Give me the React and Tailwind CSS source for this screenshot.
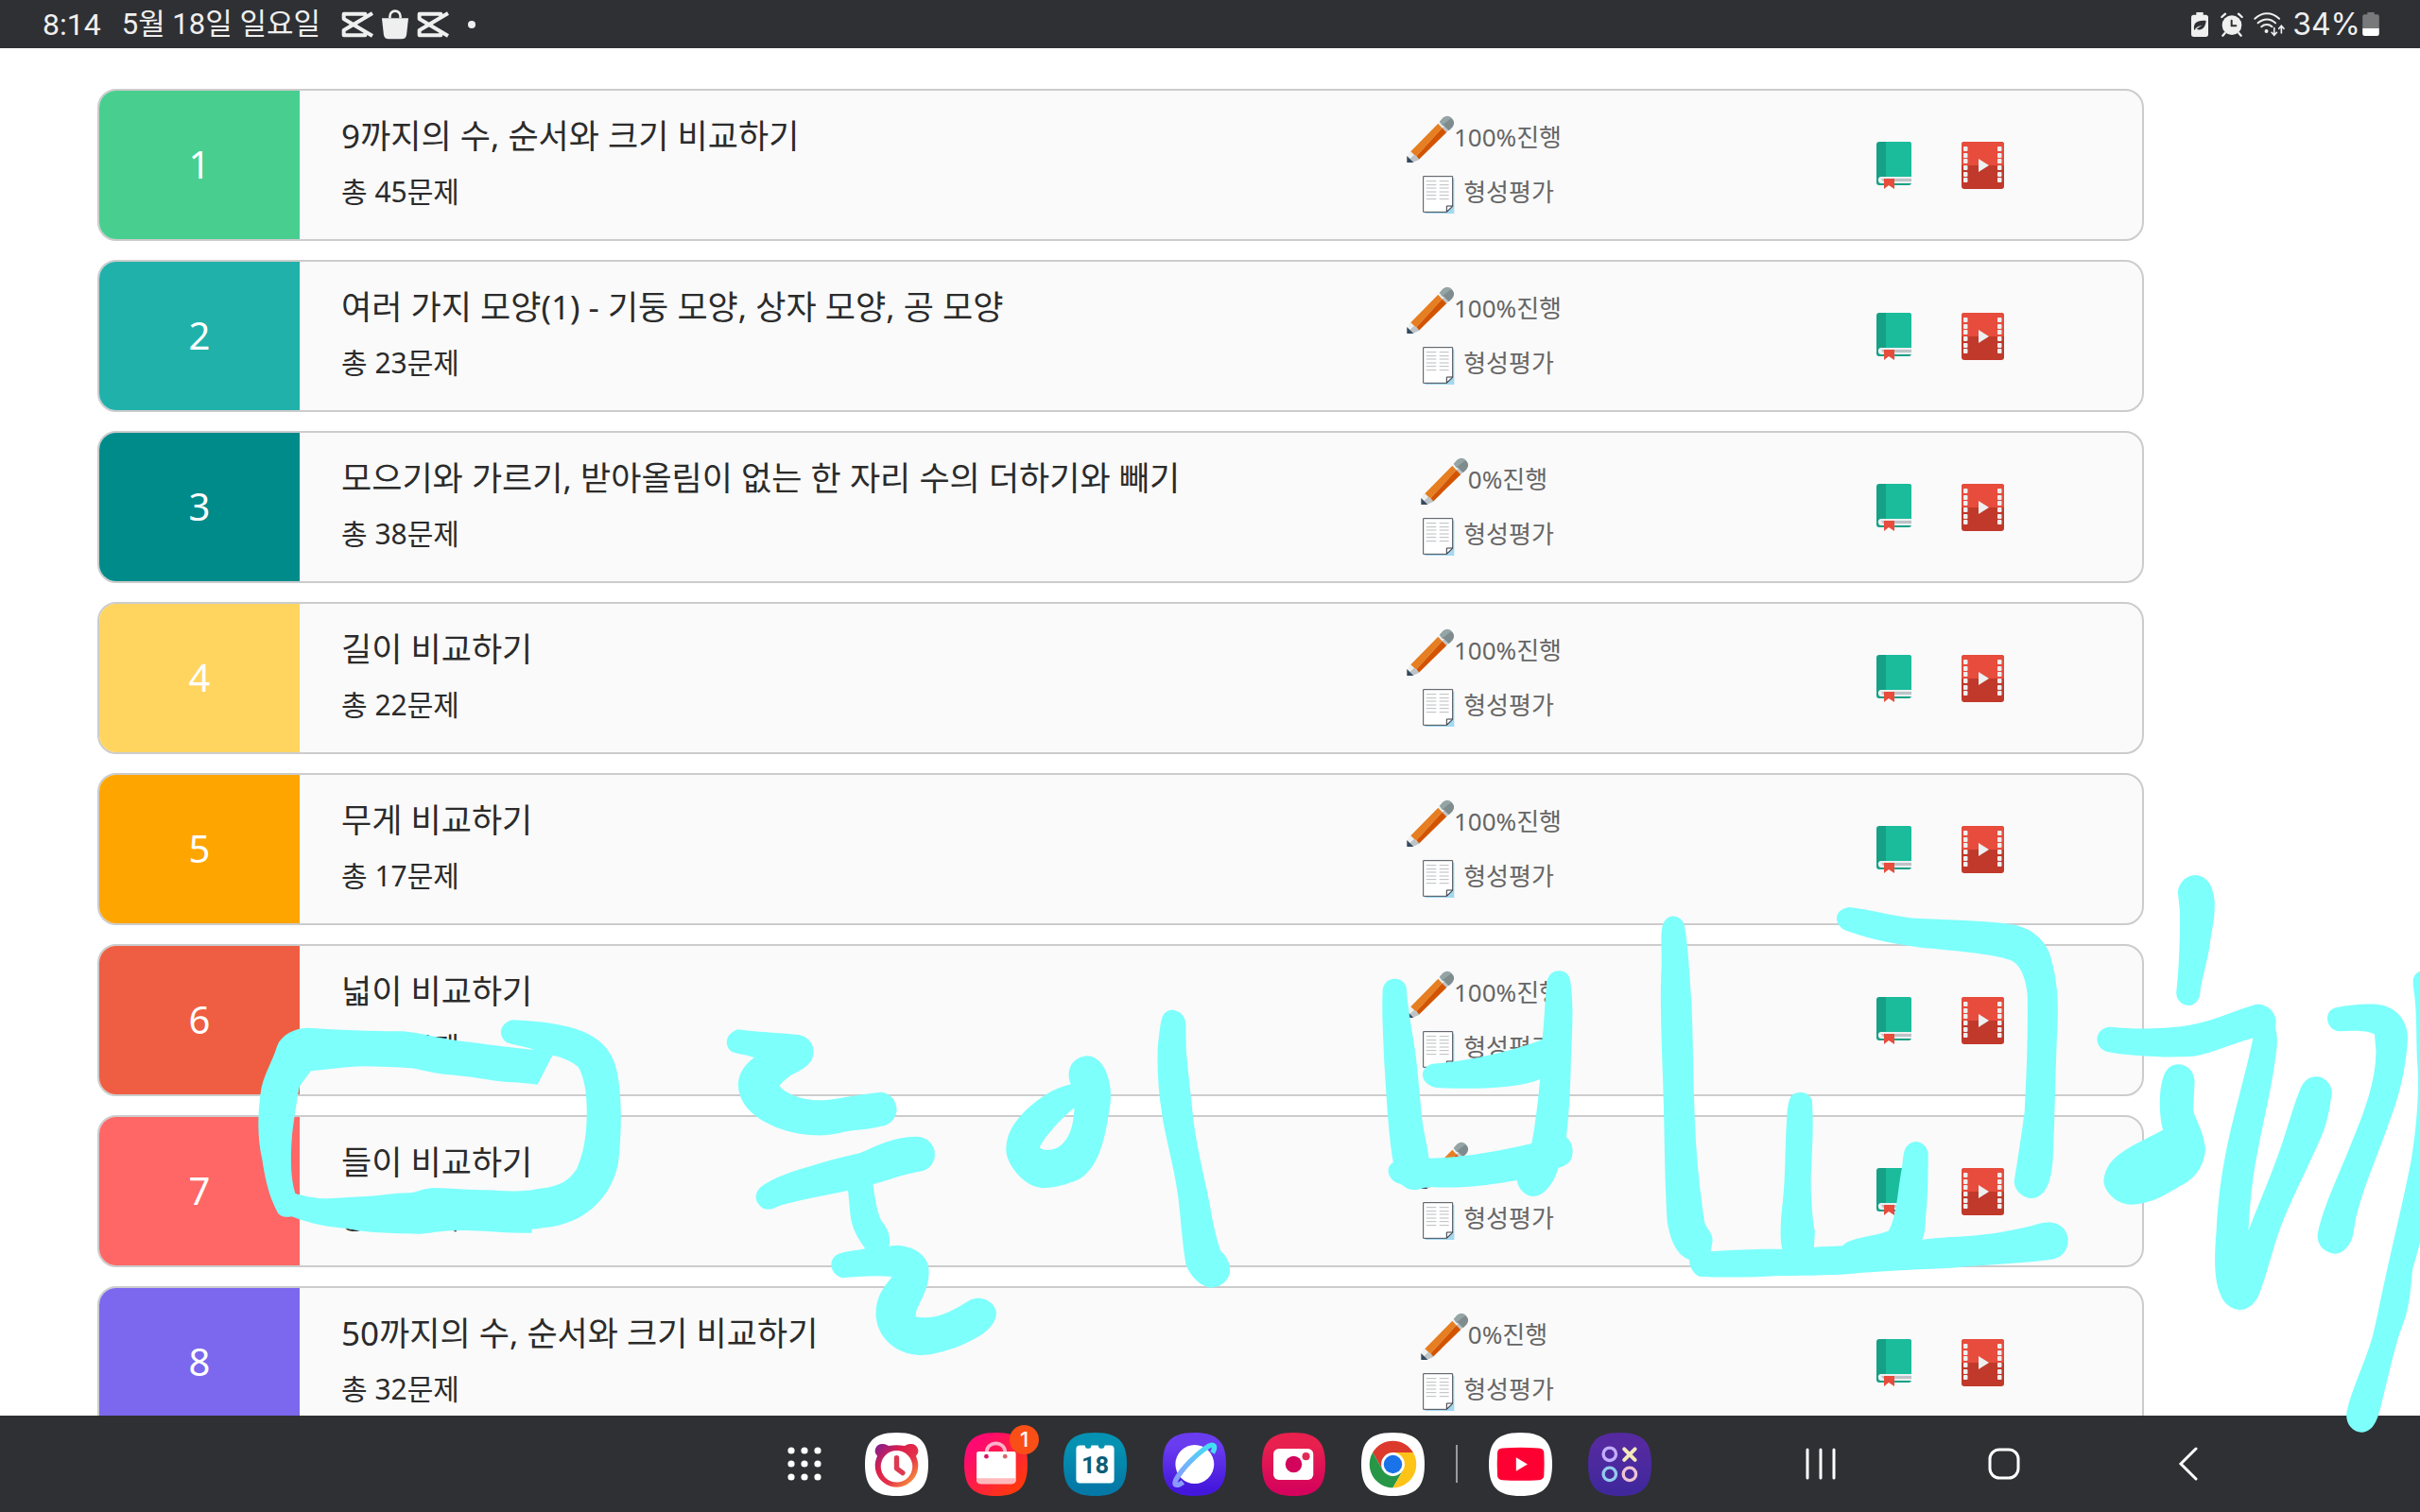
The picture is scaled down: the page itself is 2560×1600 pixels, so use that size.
import { useState } from 'react';

const UNITS = [
  { id: 1, title: '9까지의 수, 순서와 크기 비교하기', count: 45, progress: 100, color: 'bg-[#48cf8f]' },
  { id: 2, title: '여러 가지 모양(1) - 기둥 모양, 상자 모양, 공 모양', count: 23, progress: 100, color: 'bg-[#20b2aa]' },
  { id: 3, title: '모으기와 가르기, 받아올림이 없는 한 자리 수의 더하기와 빼기', count: 38, progress: 0, color: 'bg-[#008b8b]' },
  { id: 4, title: '길이 비교하기', count: 22, progress: 100, color: 'bg-[#ffd560]' },
  { id: 5, title: '무게 비교하기', count: 17, progress: 100, color: 'bg-[#ffa500]' },
  { id: 6, title: '넓이 비교하기', count: 18, progress: 100, color: 'bg-[#ef5e42]' },
  { id: 7, title: '들이 비교하기', count: 18, progress: 0, color: 'bg-[#ff6666]' },
  { id: 8, title: '50까지의 수, 순서와 크기 비교하기', count: 32, progress: 0, color: 'bg-[#7b68ee]' },
];

function PencilIcon() {
  return (
    <svg viewBox="0 -5 150 150" className="size-[50px] shrink-0 overflow-visible" aria-hidden="true">
      <path d="M10 116 100 24l13 14-82 90z" fill="#e67e22" />
      <path d="m31 128 82-90 14 14-88 86z" fill="#d35400" />
      <path d="m100 24 10-11 14 14-11 11z" fill="#ecf0f1" />
      <path d="m113 38 11-11 14 14-11 11z" fill="#bdc3c7" />
      <path d="m104 18 8-9c12-12 22-10 30-3l-18 21-10 5z" fill="#95a5a6" />
      <path d="m142 6c10 9 12 20 0 33l-8 8-19-19z" fill="#7f8c8d" />
      <path d="m10 110 14 13-23 14z" fill="#ecf0f1" />
      <path d="m24 123 17 15-22 10-14-8z" fill="#bdc3c7" />
      <path d="M1 127 22 148H1z" fill="#34495e" />
    </svg>
  );
}

function PaperIcon() {
  return (
    <svg viewBox="-3 -6 120 120" className="size-10 shrink-0 overflow-visible" aria-hidden="true">
      <path d="M20 8h92v112H20z" fill="#a3d8f2" />
      <path d="M14 2h93v96l-18 17H14z" fill="#fff" stroke="#4a4f55" strokeWidth="3" />
      <path d="M88 114V96h19z" fill="#fff" stroke="#30363c" strokeWidth="3" />
      <path
        d="M23 17h32M65 17h30M23 29h32M65 29h30M23 39h32M65 39h30M23 51h32M65 51h30M23 62h32M65 62h30M23 74h32M65 74h30"
        stroke="#b9bcbf"
        strokeWidth="3"
      />
    </svg>
  );
}

function BookIcon() {
  return (
    <svg viewBox="0 0 37 50" className="h-[50px] w-[37px]" aria-hidden="true">
      <rect width="37" height="46" rx="3" fill="#16a085" />
      <path d="M10 0h24a3 3 0 0 1 3 3v34H10z" fill="#1abc9c" />
      <path d="M5 37h32v7H5a3 3 0 0 1-3-3 3 3 0 0 1 3-4z" fill="#ecf0f1" />
      <path d="M5 39h32v3H7z" fill="#bdc3c7" />
      <path d="M8 39h11v11l-6-4-5 4z" fill="#e74c3c" />
    </svg>
  );
}

function FilmIcon() {
  const holes = [5, 12, 18, 25, 32, 38];
  return (
    <svg viewBox="0 0 45 50" className="h-[50px] w-[45px]" aria-hidden="true">
      <rect width="45" height="50" rx="3" fill="#c0392b" />
      <path d="M3 0h39a3 3 0 0 1 3 3v22H0V3a3 3 0 0 1 3-3z" fill="#e74c3c" />
      {holes.map((y) => (
        <g key={y} fill="#ecf0f1">
          <rect x="2" y={y} width="4.500" height="5" rx="1" />
          <rect x="38" y={y} width="4.500" height="5" rx="1" />
        </g>
      ))}
      <path d="m18 18 11 7-11 7z" fill="#ecf0f1" />
    </svg>
  );
}

function UnitRow({ unit }) {
  return (
    <li className="flex h-[161px] shrink-0 overflow-hidden rounded-[20px] border-2 border-[#cccccc] bg-[#fafafa]">
      <div className={`flex w-[212px] shrink-0 items-center justify-center pb-0.5 text-[40px] text-white ${unit.color}`}>
        {unit.id}
      </div>
      <div className="flex min-w-0 flex-1 flex-col justify-center pb-1 pl-11 text-[#2b2b2b]">
        <h2 className="text-[35px] leading-[60px] whitespace-nowrap">{unit.title}</h2>
        <p className="text-[30px] leading-[58px]">총 {unit.count}문제</p>
      </div>
      <div className="flex w-[532px] shrink-0 flex-col items-center justify-center text-[26px] text-[#666666]">
        <div className="flex h-[58px] items-center">
          <PencilIcon />
          <span>{unit.progress}%진행</span>
        </div>
        <button type="button" className="flex h-[58px] items-center gap-2 pl-1">
          <PaperIcon />
          <span>형성평가</span>
        </button>
      </div>
      <div className="flex w-[430px] shrink-0 items-center justify-center gap-[53px] pl-0.5">
        <button type="button" aria-label="교재">
          <BookIcon />
        </button>
        <button type="button" aria-label="동영상">
          <FilmIcon />
        </button>
      </div>
    </li>
  );
}

function CutIcon() {
  return (
    <svg viewBox="0 0 102 84" className="h-7 w-[34px]" fill="none" stroke="#efefef" strokeWidth="12" aria-hidden="true">
      <path d="M99 6 8 60v16h68V64M99 78 8 24V8h68v12" strokeLinejoin="round" />
    </svg>
  );
}

function StatusBar() {
  return (
    <header className="flex h-[51px] shrink-0 items-center justify-between bg-[#2f3034] pr-[43px] pl-[45px] text-[#efefef]">
      <div className="flex items-center">
        <span className="mr-[22px] font-[Roboto,sans-serif] text-[32px]">8:14</span>
        <span className="mr-[22px] font-[Roboto,'Noto_Sans_CJK_KR',sans-serif] text-[31px] leading-[51px]">5월 18일 일요일</span>
        <div className="flex items-center gap-2">
          <CutIcon />
          <svg viewBox="0 0 90 98" className="h-8 w-[30px]" aria-hidden="true">
            <path d="M28 28V22a17 17 0 0 1 34 0v6" fill="none" stroke="#efefef" strokeWidth="8" />
            <path d="M2 28h86l-6 54q-2 14-16 14H24Q10 96 8 82z" fill="#efefef" />
          </svg>
          <CutIcon />
          <span className="ml-3 size-2 rounded-full bg-[#efefef]" />
        </div>
      </div>
      <div className="flex items-center">
        <svg viewBox="0 0 54 78" className="mr-[13px] h-[26px] w-[18px]" aria-hidden="true">
          <path d="M16 0h22v8h8q8 0 8 8v54q0 8-8 8H8q-8 0-8-8V16q0-8 8-8h8z" fill="#efefef" />
          <path d="M10 58c-6-24 10-34 37-31-2 24-16 33-30 26 6-4 10-8 18-12-12 2-20 6-25 17z" fill="#2f3034" />
        </svg>
        <svg viewBox="0 0 72 78" className="mr-[11px] h-[26px] w-6" fill="none" strokeLinecap="round" aria-hidden="true">
          <circle cx="36" cy="41" r="31" fill="#efefef" />
          <path d="M4 15 15 5M68 15 57 5M14 66l-7 8M58 66l7 8" stroke="#efefef" strokeWidth="7" />
          <path d="M35 26v17h14" stroke="#2f3034" strokeWidth="6" />
        </svg>
        <svg viewBox="0 0 100 78" className="mr-2 h-[26px] w-[33px]" fill="none" stroke="#efefef" strokeWidth="6" strokeLinecap="round" aria-hidden="true">
          <path d="M4 20c24-22 54-22 78 0M14 34c18-16 40-16 56 0M25 46c10-9 24-9 34 0" />
          <circle cx="41" cy="60" r="3" fill="#efefef" />
          <path d="M66 50v22m-8-8 8 9 8-9M89 66V44m-8 8 8-9 8 9" strokeWidth="5" />
        </svg>
        <span className="mr-0.5 font-[Inter,sans-serif] text-[32px]">34%</span>
        <svg viewBox="0 0 52 74" className="h-[25px] w-[18px]" aria-hidden="true">
          <path d="M15 0h22v7h9q6 0 6 6v39H0V13q0-6 6-6h9z" fill="#78797b" />
          <path d="M0 50h52v17q0 7-7 7H7q-7 0-7-7z" fill="#fff" />
        </svg>
      </div>
    </header>
  );
}

function AppIcon({ label, from, to, diagonal, children }) {
  const gradientId = `bg-${label}`;
  return (
    <button type="button" aria-label={label} className="size-[67px]">
      <svg viewBox="0 0 200 200" className="size-full">
        <defs>
          <linearGradient id={gradientId} x1="0" y1="0" x2={diagonal ? '1' : '0'} y2="1">
            <stop offset="0.2" stopColor={from} />
            <stop offset="0.9" stopColor={to} />
          </linearGradient>
        </defs>
        <path
          d="M100 0C172 0 200 28 200 100S172 200 100 200 0 172 0 100 28 0 100 0z"
          fill={`url(#${gradientId})`}
        />
        {children}
      </svg>
    </button>
  );
}

function Dock() {
  return (
    <div className="flex items-center">
      <button type="button" aria-label="모든 앱" className="mr-[46px]">
        <svg viewBox="0 0 36 36" className="size-9" fill="#fff" aria-hidden="true">
          {[4, 18, 32].map((y) => [4, 18, 32].map((x) => <circle key={`${x}-${y}`} cx={x} cy={y} r="3.6" />))}
        </svg>
      </button>
      <div className="flex items-center gap-[38px]">
        <AppIcon label="alarm" from="#ffffff" to="#ffffff">
          <defs>
            <linearGradient id="alarm-ring" x1="0" y1="0" x2="1" y2="1">
              <stop offset="0.05" stopColor="#8a1f8a" />
              <stop offset="0.35" stopColor="#dc1f4a" />
              <stop offset="0.6" stopColor="#e5304a" />
              <stop offset="0.9" stopColor="#f7963a" />
            </linearGradient>
          </defs>
          <path
            d="M55 36c12 0 14 4 20 6q25-5 50 0c6-2 8-6 20-6a22 22 0 0 1 16 38 68 68 0 1 1-122 0 22 22 0 0 1 16-38z"
            fill="url(#alarm-ring)"
          />
          <circle cx="100" cy="107" r="50" fill="#fff" />
          <path d="M100 80v33l19 14" fill="none" stroke="#dd3a52" strokeWidth="16" strokeLinecap="round" strokeLinejoin="round" />
        </AppIcon>
        <div className="relative h-[67px]">
          <AppIcon label="store" from="#ff0a70" to="#ff3a08" diagonal>
            <path d="M71 66V60a29 26 0 0 1 58 0v6" fill="none" stroke="#ffb3cb" strokeWidth="11" />
            <path d="M45 60h112q6 0 6 6v82q0 14-14 14H53q-14 0-14-14V66q0-6 6-6z" fill="#fff" />
            <path d="M39 144h124v4q0 14-14 14H53q-14 0-14-14z" fill="#ffb9bd" />
            <circle cx="70" cy="75" r="7" fill="#d9106a" />
            <circle cx="129" cy="75" r="7" fill="#dc6470" />
          </AppIcon>
          <span className="absolute -top-2 -right-3 flex size-[31px] items-center justify-center rounded-full bg-[#f94f16] font-[Inter,sans-serif] text-[22px] font-medium text-white">
            1
          </span>
        </div>
        <AppIcon label="calendar" from="#0592b2" to="#0478a6">
          <path
            d="M52 40h16a10 10 0 0 0 20 0h22a10 10 0 0 0 20 0h18q12 0 12 12v96q0 12-12 12H52q-12 0-12-12V52q0-12 12-12z"
            fill="#fff"
          />
          <text x="100" y="128" textAnchor="middle" fontFamily="Roboto, sans-serif" fontSize="76" fontWeight="700" fill="#0b5d78">
            18
          </text>
        </AppIcon>
        <AppIcon label="internet" from="#6a3cf0" to="#4417dc">
          <defs>
            <linearGradient id="orbit" x1="1" y1="0" x2="0" y2="1">
              <stop offset="0" stopColor="#3fe3f2" />
              <stop offset="1" stopColor="#8f96ff" />
            </linearGradient>
          </defs>
          <circle cx="101" cy="100" r="61" fill="#fff" />
          <path
            d="M157 64C170 42 160 34 144 43 108 66 62 112 42 148c-10 20 4 22 22 8"
            fill="none"
            stroke="url(#orbit)"
            strokeWidth="16"
          />
        </AppIcon>
        <AppIcon label="camera" from="#e8204e" to="#d6035c">
          <rect x="36" y="51" width="126" height="98" rx="17" fill="#fff" />
          <circle cx="100" cy="100" r="26" fill="#d2045c" />
          <circle cx="139" cy="75" r="12" fill="#e02a56" />
        </AppIcon>
        <AppIcon label="chrome" from="#ffffff" to="#ffffff">
          <path d="M164 63A74 74 0 0 0 36 63l32 56 32-56z" fill="#db3a2c" />
          <path d="M36 63a74 74 0 0 0 64 111l32-55-64 0z" fill="#279747" />
          <path d="M164 63a74 74 0 0 1-64 111l32-55-32-56z" fill="#fdc317" />
          <circle cx="100" cy="100" r="37" fill="#fff" />
          <circle cx="100" cy="100" r="29" fill="#1a73e8" />
        </AppIcon>
      </div>
      <span className="mx-[33px] h-10 w-0.5 bg-[#9a9b9d]" />
      <div className="flex items-center gap-[38px]">
        <AppIcon label="youtube" from="#ffffff" to="#ffffff">
          <path
            d="M42 49q58-4 116 0 15 1 16 14 2 36 0 73-1 13-16 14-58 3-116 0-14-1-15-14-2-37 0-73 1-13 15-14z"
            fill="#ff0033"
          />
          <path d="m86 78 36 22-36 22z" fill="#fff" />
        </AppIcon>
        <AppIcon label="games" from="#552aa0" to="#40289c">
          <g fill="none" strokeWidth="10">
            <circle cx="68" cy="68" r="20" stroke="#c3adff" />
            <path d="m114 52 34 34m0-34-34 34" stroke="#f1e9b9" strokeWidth="12" strokeLinecap="round" />
            <circle cx="68" cy="131" r="20" stroke="#92cbee" />
            <circle cx="131" cy="131" r="20" stroke="#ecc4d2" />
          </g>
        </AppIcon>
      </div>
    </div>
  );
}

function NavigationBar() {
  return (
    <nav className="flex h-[102px] shrink-0 items-center justify-between bg-[#2f3034] pr-[228px] pl-[833px]">
      <Dock />
      <div className="flex items-center gap-[158px] text-white">
        <button type="button" aria-label="최근 앱">
          <svg viewBox="0 0 36 36" className="size-9" stroke="currentColor" strokeWidth="3" strokeLinecap="round">
            <path d="M4 3v30M18 3v30M32 3v30" />
          </svg>
        </button>
        <button type="button" aria-label="홈">
          <svg viewBox="0 0 36 36" className="size-9" fill="none" stroke="currentColor" strokeWidth="3">
            <rect x="3" y="3" width="30" height="30" rx="10" />
          </svg>
        </button>
        <button type="button" aria-label="뒤로">
          <svg viewBox="0 0 36 36" className="size-9" fill="none" stroke="currentColor" strokeWidth="3" strokeLinecap="round">
            <path d="M27 2 11 18l16 16" />
          </svg>
        </button>
      </div>
    </nav>
  );
}

// freehand pen layer drawn over the whole screen
function PenLayer() {
  return (
    <svg
      viewBox="0 0 2560 1600"
      className="pointer-events-none absolute inset-0 size-full"
      fill="#7dfffc"
      fillRule="evenodd"
      aria-hidden="true"
    >
      <g transform="translate(240 1040) scale(0.5485 0.3333)">
        <path d="M155 143C220 150 270 153 340 154C380 160 400 175 460 187C500 195 560 208 595 213C580 205 555 198 540 190C522 170 525 130 550 118C600 122 640 130 670 145C720 170 745 220 752 280C762 350 762 470 755 570C748 640 715 740 640 770C620 777 600 780 588 782L588 794C540 797 500 786 450 786C410 786 390 797 370 797C300 795 260 790 240 782C200 777 160 765 125 742C110 747 102 740 98 730C85 690 75 640 68 560C60 500 58 440 65 350C68 300 88 250 97 200C105 165 130 145 155 143ZM162 280C200 275 230 266 265 265C310 268 340 268 365 273C390 283 410 290 440 293C480 300 510 310 540 315C560 315 580 320 599 323L628 230C650 238 668 252 678 268C692 310 695 370 694 430C693 490 688 540 675 590C660 630 640 645 610 652C560 668 530 660 500 658C460 657 430 652 400 651C370 655 370 665 350 667C320 668 300 675 270 678C230 680 200 686 185 685C160 682 145 675 132 669C123 620 122 560 126 480C130 430 135 370 140 330C148 310 158 290 162 280Z" />
        <path d="M985 148C1020 157 1060 158 1105 166C1125 175 1135 200 1130 235C1125 270 1095 285 1085 297C1075 310 1068 320 1066 328C1075 350 1110 373 1140 373C1170 373 1210 355 1262 347C1280 350 1292 375 1292 405C1290 430 1280 448 1270 452C1240 466 1210 466 1190 473C1170 482 1155 485 1135 484C1070 480 1020 435 1000 390C978 335 982 280 1017 237C1000 228 985 226 975 220C960 205 958 165 985 148Z" />
        <path d="M1330 488C1355 490 1368 520 1365 555C1362 580 1350 595 1340 598C1310 605 1270 630 1246 640C1250 680 1252 720 1262 755C1272 775 1282 800 1277 836C1310 828 1345 850 1353 900C1358 960 1340 1000 1330 1040L1328 1060C1370 1072 1400 1040 1435 1006C1455 992 1480 1010 1484 1045C1484 1080 1470 1115 1410 1155C1380 1172 1360 1182 1335 1182C1290 1180 1255 1125 1252 1060C1250 1000 1265 970 1283 933C1250 928 1215 933 1188 937C1165 930 1158 885 1175 865C1190 850 1215 852 1231 844C1215 805 1205 780 1202 730L1198 659C1150 677 1100 690 1065 708C1055 718 1045 722 1035 717C1018 700 1015 670 1030 648C1060 610 1120 585 1150 570C1180 555 1200 550 1220 541C1250 520 1285 488 1330 488Z" />
      </g>
      <g transform="translate(1040 1020) scale(0.4464 0.3333)">
        <path d="M245 292C270 292 285 320 292 345C305 390 305 430 297 480C290 540 280 600 260 640C235 690 215 690 195 700C165 712 140 715 120 705C90 690 60 640 55 600C52 540 75 500 105 460C135 425 165 395 208 382C197 350 203 300 245 292ZM216 457C185 490 145 550 134 583C140 592 160 595 178 582C205 560 215 510 216 457Z" />
        <path d="M450 146C465 148 480 165 480 190L481 270C485 340 492 410 497 480C505 580 525 680 538 770C545 830 555 880 563 912C580 930 588 960 584 985C578 1010 560 1028 540 1028C515 1028 485 980 480 950C470 870 468 790 460 720C450 630 430 540 423 470C415 400 412 330 414 260C418 220 420 180 426 165C432 150 440 146 450 146Z" />
        <path d="M975 47C990 47 1000 58 1003 75C1005 130 1015 200 1022 260C1032 350 1035 440 1042 510C1048 560 1055 590 1056 617C1130 617 1220 595 1300 570C1310 500 1315 430 1320 366C1270 393 1180 400 1075 393C1035 385 1030 330 1065 317C1120 312 1230 290 1325 240C1330 190 1330 130 1336 60C1338 35 1350 22 1365 22C1380 22 1392 35 1393 70C1400 150 1395 230 1393 300C1392 400 1388 480 1382 550C1395 565 1400 590 1395 615C1390 635 1375 642 1363 648C1355 690 1330 738 1305 738C1285 738 1268 715 1265 687C1210 700 1130 715 1060 708C1045 708 1035 718 1020 717C1000 715 995 700 988 698C960 690 950 645 972 630C960 540 955 400 950 300C948 220 944 150 947 80C950 60 960 48 975 47Z" />
      </g>
      <g transform="translate(1740 900) scale(0.523 0.3954)">
        <path d="M57 176C70 177 78 188 80 200C88 260 90 330 94 400C98 500 97 580 100 680C102 780 108 880 120 990C122 1010 137 1020 137 1045L133 1073C190 1068 240 1065 278 1067C272 1040 275 990 278 950C285 880 283 800 287 720C288 690 290 670 297 655C310 642 332 645 338 668C342 740 338 800 336 870C335 930 340 1000 344 1020L342 1062C360 1060 380 1060 400 1058C415 1035 460 1035 493 1018C510 980 512 900 520 850C524 810 522 785 548 779C562 780 572 795 573 810C573 880 572 940 568 980C568 1010 565 1030 561 1042C620 1030 690 1040 800 998C840 985 857 1020 856 1045C855 1075 840 1090 825 1094C770 1105 700 1108 620 1117C560 1120 500 1125 440 1130C390 1137 340 1138 270 1138C220 1142 170 1144 110 1140C98 1132 90 1115 90 1095C65 1085 50 1040 45 990C40 880 40 780 38 680C36 560 30 440 33 330C36 270 30 230 36 200C40 185 47 176 57 176Z" />
        <path d="M413 152C450 157 500 175 535 180C600 187 670 185 740 197C780 205 805 235 817 270C830 320 837 380 835 450C832 540 830 640 828 740C825 800 828 840 818 885C812 910 800 930 782 931C765 930 747 910 747 885C755 820 762 760 768 700C772 600 775 500 774 390C772 350 762 310 745 297C720 280 640 270 575 262C520 255 460 240 413 217C385 210 375 160 413 152Z" />
        <path d="M1115 66C1135 68 1148 90 1152 130C1155 180 1145 220 1142 260C1135 310 1125 350 1122 390C1118 405 1110 415 1100 415C1085 413 1075 400 1075 380C1080 320 1083 240 1082 160L1078 110C1082 80 1098 66 1115 66Z" />
        <path d="M940 472C1000 480 1070 478 1120 462C1160 450 1200 425 1235 412C1262 408 1280 440 1276 465L1275 475C1282 500 1278 530 1275 560C1265 660 1240 780 1230 880C1225 930 1222 980 1221 1017C1240 950 1270 860 1290 780C1305 720 1315 670 1327 635C1335 610 1350 602 1365 606C1385 615 1392 640 1389 655C1385 690 1382 720 1370 760C1345 840 1300 950 1280 1030C1265 1090 1255 1150 1240 1195C1230 1220 1215 1230 1203 1229C1185 1228 1170 1210 1165 1190C1150 1150 1152 1080 1156 1020C1160 900 1175 800 1190 720C1205 640 1220 570 1230 502C1190 515 1150 542 1110 551C1060 555 990 552 935 539C905 525 910 475 940 472Z" />
        <path d="M1080 572C1100 573 1112 595 1112 620L1109 695C1115 725 1130 750 1134 800C1130 850 1112 880 1080 900C1050 925 1020 945 985 948C955 948 930 915 928 885C930 850 945 825 965 808C990 785 1025 765 1048 748C1042 720 1040 680 1043 640C1048 600 1055 572 1080 572Z" />
        <path d="M1400 420C1430 412 1470 408 1492 414C1525 425 1543 460 1543 505C1540 580 1525 660 1510 710C1490 790 1460 880 1445 950C1435 990 1435 1020 1430 1040C1422 1065 1410 1078 1397 1079C1375 1078 1358 1055 1361 1025C1370 960 1400 880 1430 780C1455 700 1478 620 1479 540L1476 492C1460 480 1430 482 1405 484C1375 480 1372 425 1400 420Z" />
        <path d="M1570 322C1552 330 1553 350 1555 370C1562 430 1560 500 1562 560C1568 640 1560 750 1550 830C1535 930 1515 1040 1500 1130C1488 1200 1480 1260 1472 1300C1460 1360 1430 1440 1420 1500C1415 1530 1430 1556 1450 1557C1475 1555 1483 1520 1490 1480C1505 1400 1515 1340 1527 1290C1550 1220 1548 1170 1553 1120L1570 1040Z" />
      </g>
    </svg>
  );
}

export default function App() {
  const [units] = useState(UNITS);

  return (
    <div className="relative flex h-screen flex-col overflow-hidden bg-white font-['Noto_Sans','Noto_Sans_CJK_KR',sans-serif]">
      <StatusBar />
      <main className="min-h-0 flex-1 overflow-hidden pt-[43px] pr-[292px] pl-[103px]">
        <ul className="flex flex-col gap-5">
          {units.map((unit) => (
            <UnitRow key={unit.id} unit={unit} />
          ))}
        </ul>
      </main>
      <NavigationBar />
      <PenLayer />
    </div>
  );
}
